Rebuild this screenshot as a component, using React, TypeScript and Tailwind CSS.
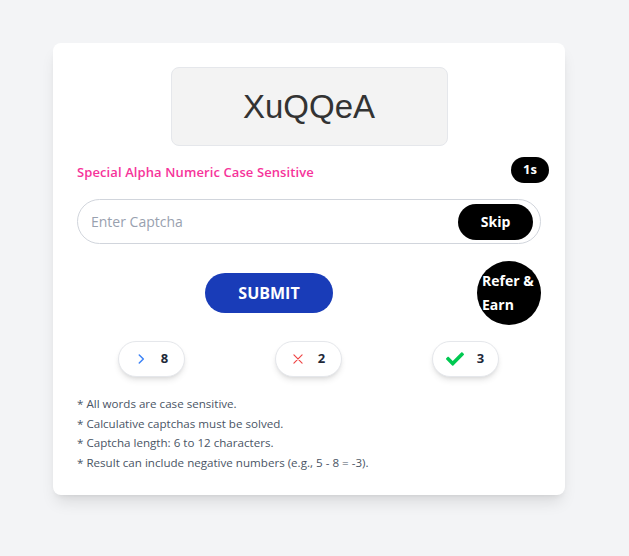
import { FaCheck } from "react-icons/fa";

const notes = [
  "* All words are case sensitive.",
  "* Calculative captchas must be solved.",
  "* Captcha length: 6 to 12 characters.",
  "* Result can include negative numbers (e.g., 5 - 8 = -3).",
];

const Counter = ({ icon, value }: { icon: React.ReactNode; value: number }) => (
  <div className="flex h-[36px] w-[67px] items-center justify-center gap-[13px] rounded-full border border-gray-200 bg-white shadow-md">
    {icon}
    <span className="text-[13px] font-bold text-gray-800">{value}</span>
  </div>
);

const App = () => {
  return (
    <div
      className="min-h-screen bg-gray-100 pt-[43px] pl-[53px]"
      style={{ fontFamily: '"Open Sans", "Noto Sans", sans-serif' }}
    >
      <div className="w-[512px] rounded-lg bg-white px-6 pt-6 pb-[23px] shadow-lg">
        <div className="mx-auto flex h-[79px] w-[277px] items-center justify-center rounded-lg border border-gray-200 bg-[#f3f3f3]">
          <span
            className="text-[33px] text-[#333]"
            style={{ fontFamily: '"Liberation Sans", Arial, sans-serif' }}
          >
            XuQQeA
          </span>
        </div>

        <div className="mt-[11px] flex items-center justify-between">
          <span className="mt-[6px] text-[13px] font-semibold tracking-[0.1px] text-pink-500">
            Special Alpha Numeric Case Sensitive
          </span>
          <span className="mr-[-8px] flex h-[26px] w-[38px] items-center justify-center rounded-full bg-black text-[13px] font-bold text-white">
            1s
          </span>
        </div>

        <div className="mt-[16px] flex h-[45px] items-center rounded-full border border-gray-300 pr-[7px] pl-[13px]">
          <input
            className="flex-1 bg-transparent text-[14px] text-gray-700 outline-none placeholder:text-gray-400"
            placeholder="Enter Captcha"
          />
          <button className="h-[36px] w-[75px] rounded-full bg-black text-[14px] font-bold text-white">
            Skip
          </button>
        </div>

        <div className="mt-[17px] flex h-[64px] items-center">
          <div className="flex flex-1 justify-center pr-[16px]">
            <button className="h-[40px] w-[128px] rounded-full bg-blue-800 text-[16px] font-bold text-white">
              SUBMIT
            </button>
          </div>
          <div className="flex h-[64px] w-[64px] items-center rounded-full bg-black pl-[5px] text-[14px] leading-[24px] font-bold whitespace-nowrap text-white">
            <span>
              Refer &amp;
              <br />
              Earn
            </span>
          </div>
        </div>

        <div className="mt-[16px] flex justify-center gap-[90px] pr-[2px]">
          <Counter
            value={8}
            icon={
              <svg width="14" height="14" viewBox="0 0 24 24" fill="none" stroke="#3b82f6" strokeWidth="2.5" strokeLinecap="round" strokeLinejoin="round">
                <path d="M9 5l7 7-7 7" />
              </svg>
            }
          />
          <Counter
            value={2}
            icon={
              <svg width="14" height="14" viewBox="0 0 24 24" fill="none" stroke="#ef4444" strokeWidth="2" strokeLinecap="round">
                <path d="M5 5l14 14M19 5L5 19" />
              </svg>
            }
          />
          <Counter value={3} icon={<FaCheck className="h-[18px] w-[18px] text-green-500" />} />
        </div>

        <div className="mt-[17px] flex flex-col text-[11.6px] leading-[19.5px] text-gray-600">
          {notes.map((note) => (
            <p key={note}>{note}</p>
          ))}
        </div>
      </div>
    </div>
  );
};

export default App;
